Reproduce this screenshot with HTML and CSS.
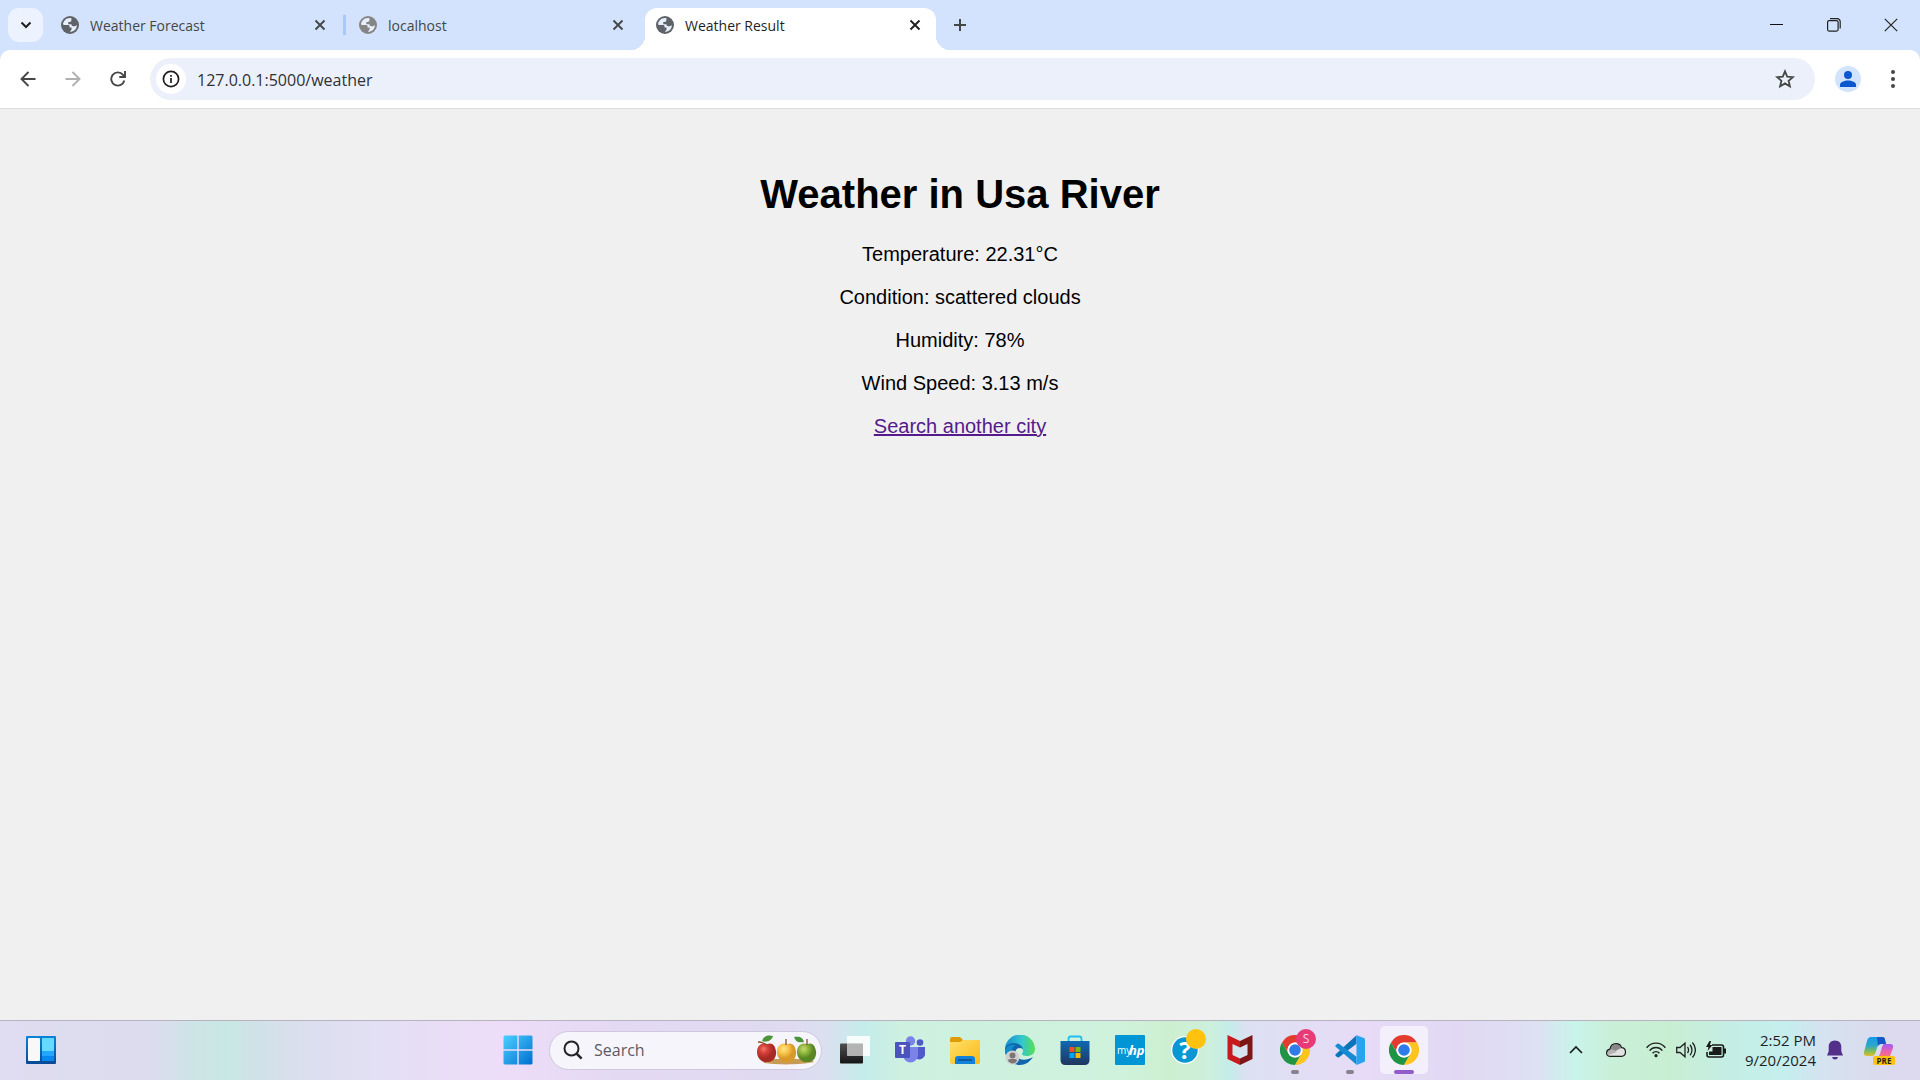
FILE: index.html
```html
<!DOCTYPE html>
<html lang="en">
<head>
<meta charset="utf-8">
<title>Weather Result</title>
<link rel="stylesheet" href="styles.css">
</head>
<body>
<svg class="defs" aria-hidden="true">
  <defs>
    <symbol id="globe" viewBox="0 0 18 18">
      <circle cx="9" cy="9" r="9" fill="currentColor"/>
      <path class="land" d="M10.400 2.200C5.800 1.400 2.200 4.600 2 8.600L3.400 9H7c1 0 1.600.6 1.600 1.500V11.600h2v1.700l-1.600 2.600c2.600.1 5.300-1.600 6.400-4.100.4-1 .4-1.800.4-2.700-.5.7-1.100 1.100-2 1.100h-1.700c-1 0-1.600-.6-1.600-1.600V8.200H7.300V5.900h1.300c1.100 0 1.800-.6 1.800-1.600z"/>
    </symbol>
    <symbol id="close" viewBox="0 0 12 12"><path d="M1.500 1.500l9 9m0-9l-9 9" fill="none" stroke="currentColor" stroke-width="1.900"/></symbol>
    <symbol id="chrome" viewBox="0 0 48 48">
      <path fill="#e33b2e" d="M24 12H44.800A24 24 0 0 0 3.200 12L13.600 30A12 12 0 0 1 24 12z"/>
      <path fill="#1f9444" d="M13.600 30L3.200 12A24 24 0 0 0 24 48L34.400 30A12 12 0 0 1 13.600 30z"/>
      <path fill="#fcc41c" d="M34.400 30L24 48A24 24 0 0 0 44.800 12H24A12 12 0 0 1 34.400 30z"/>
      <circle cx="24" cy="24" r="12" fill="#fff"/><circle cx="24" cy="24" r="9.300" fill="#2f7bea"/>
    </symbol>
  </defs>
</svg>

<header class="browser">
  <div class="tabstrip">
    <button class="tab-search" aria-label="Search tabs"><svg width="12" height="12" viewBox="0 0 12 12"><path d="M1.500 3.500L6 8l4.500-4.500" fill="none" stroke="#1f1f1f" stroke-width="2"/></svg></button>
    <div class="tab">
      <svg class="favicon"><use href="#globe"/></svg><span class="tab-title">Weather Forecast</span>
      <button class="tab-close" aria-label="Close Weather Forecast"><svg><use href="#close"/></svg></button>
    </div>
    <div class="tab divided">
      <svg class="favicon muted"><use href="#globe"/></svg><span class="tab-title">localhost</span>
      <button class="tab-close" aria-label="Close localhost"><svg><use href="#close"/></svg></button>
    </div>
    <div class="tab active">
      <svg class="favicon"><use href="#globe"/></svg><span class="tab-title">Weather Result</span>
      <button class="tab-close" aria-label="Close Weather Result"><svg><use href="#close"/></svg></button>
    </div>
    <button class="new-tab" aria-label="New tab"><svg width="14" height="14" viewBox="0 0 14 14"><path d="M7 1v12M1 7h12" stroke="#444746" stroke-width="2"/></svg></button>
    <div class="window-controls">
      <button aria-label="Minimize"><svg width="14" height="14" viewBox="0 0 14 14"><path d="M0 6.500h13" stroke="#111"/></svg></button>
      <button aria-label="Restore"><svg width="14" height="14" viewBox="0 0 14 14" fill="none" stroke="#222" stroke-width="1.200"><rect x=".6" y="2.600" width="10.500" height="10.500" rx="1.500"/><path d="M3 .6h7.200a3 3 0 0 1 3 3V10.500"/></svg></button>
      <button aria-label="Close window"><svg width="14" height="14" viewBox="0 0 14 14"><path d="M.8.8l12.400 12.400M13.200.8L.8 13.200" stroke="#222" stroke-width="1.200"/></svg></button>
    </div>
  </div>

  <div class="toolbar">
    <button class="tool" aria-label="Back"><svg width="16" height="16" viewBox="0 0 16 16"><path d="M15.500 8H2M8.500 1L1.500 8l7 7" fill="none" stroke="#444746" stroke-width="1.900"/></svg></button>
    <button class="tool" aria-label="Forward" disabled><svg width="16" height="16" viewBox="0 0 16 16"><path d="M.5 8H14M7.500 1l7 7-7 7" fill="none" stroke="#b0b0b0" stroke-width="1.900"/></svg></button>
    <button class="tool" aria-label="Reload"><svg width="16" height="16" viewBox="0 0 16 16"><path d="M14.300 9.500A6.600 6.600 0 1 1 13 3.800L14.800 6" fill="none" stroke="#444746" stroke-width="1.900"/><path d="M15 0v6H9.300" fill="none" stroke="#444746" stroke-width="1.900"/></svg></button>
    <div class="omnibox">
      <button class="site-info" aria-label="View site information"><svg width="18" height="18" viewBox="0 0 18 18"><circle cx="9" cy="9" r="7.600" fill="none" stroke="#1f1f1f" stroke-width="1.700"/><path d="M9 8v5M9 5v1.800" stroke="#1f1f1f" stroke-width="1.700"/></svg></button>
      <input class="address" type="text" aria-label="Address" value="127.0.0.1:5000/weather">
      <button class="bookmark" aria-label="Bookmark this page"><svg width="20" height="20" viewBox="0 0 20 20"><path d="M10 2.300l2.200 5.300 5.700.5-4.300 3.700 1.300 5.600L10 14.400l-4.900 3 1.300-5.600L2.100 8.100l5.700-.5z" fill="none" stroke="#444746" stroke-width="1.800"/></svg></button>
    </div>
    <button class="profile" aria-label="Profile"><svg width="16" height="16" viewBox="0 0 16 16"><circle cx="8" cy="4" r="4" fill="#0b57d0"/><path d="M0 16v-2.200C0 11.200 4.200 9.600 8 9.600s8 1.600 8 4.200V16z" fill="#0b57d0"/></svg></button>
    <button class="menu" aria-label="Menu"><svg width="4" height="18" viewBox="0 0 4 18" fill="#444746"><circle cx="2" cy="2" r="2"/><circle cx="2" cy="9" r="2"/><circle cx="2" cy="16" r="2"/></svg></button>
  </div>
</header>

<main class="page">
  <h1>Weather in Usa River</h1>
  <p>Temperature: 22.31°C</p>
  <p>Condition: scattered clouds</p>
  <p>Humidity: 78%</p>
  <p>Wind Speed: 3.13 m/s</p>
  <a href="#">Search another city</a>
</main>

<footer class="taskbar">
  <div class="task-left">
    <button class="widgets" aria-label="Widgets"><svg width="30" height="28" viewBox="0 0 30 28"><defs><linearGradient id="wg" x2="0" y2="1"><stop stop-color="#0a84d8"/><stop offset="1" stop-color="#0a4a94"/></linearGradient></defs><rect width="30" height="28" rx="1" fill="url(#wg)"/><rect x="2" y="2" width="12" height="23" rx="1" fill="#f8f8f8"/><path fill="#66d9ff" d="M16 2h12v13H16z"/><path fill="#22a6ff" d="M16 15h12v5H16z"/><path fill="#0b87f0" d="M16 20h12v5H16z"/></svg></button>
  </div>

  <div class="task-center">
    <button class="app" aria-label="Start"><svg width="30" height="30" viewBox="0 0 30 30"><defs><linearGradient id="win" x2="1" y2="1"><stop stop-color="#4bd0ff"/><stop offset="1" stop-color="#006fd0"/></linearGradient></defs><path fill="url(#win)" d="M1.500.5H14.300V14.300H.5V1.500zM15.700.5H28.500l1 1V14.300H15.700zM.5 15.700H14.300V29.500H1.500l-1-1zM15.700 15.700H29.500V28.500l-1 1H15.700z"/></svg></button>
    <label class="search">
      <svg width="20" height="20" viewBox="0 0 20 20" fill="none" stroke="#242424"><circle cx="8.500" cy="8.500" r="7" stroke-width="2"/><path d="M13.600 13.600l5 5" stroke-width="2.500"/></svg>
      <input type="search" placeholder="Search" aria-label="Search">
      <svg width="62" height="30" viewBox="0 0 62 30"><defs>
        <radialGradient id="ra" cx=".35" cy=".3"><stop stop-color="#ef7a68"/><stop offset=".45" stop-color="#d63e38"/><stop offset="1" stop-color="#a82a24"/></radialGradient>
        <radialGradient id="ya" cx=".35" cy=".3"><stop stop-color="#ffe58a"/><stop offset=".5" stop-color="#f9c54a"/><stop offset="1" stop-color="#d9992a"/></radialGradient>
        <radialGradient id="ga" cx=".35" cy=".3"><stop stop-color="#c6da70"/><stop offset=".5" stop-color="#8cb53c"/><stop offset="1" stop-color="#5a8524"/></radialGradient></defs>
        <path d="M6 24h48l4 3c-12 3-38 3-50 1z" fill="#c89b55"/>
        <path d="M11 9C5 7 1 11 1 17s5 11 10 10c6 1 10-5 9-11s-4-9-9-7z" fill="url(#ra)"/>
        <path d="M31 9c-6-2-10 2-10 8s5 11 10 10c6 1 10-5 9-11s-4-9-9-7z" fill="url(#ya)"/>
        <path d="M51 9c-6-2-10 2-10 8s5 11 10 10c6 1 10-5 9-11s-4-9-9-7z" fill="url(#ga)"/>
        <path d="M11 10C8 8 6 7 2 7M30 10V4M51 10V4" fill="none" stroke="#87512c" stroke-width="1.300"/>
        <path d="M6 6C8 0 13 0 17 1c-1 4-6 7-11 5zM38 2c5-1 9 0 10 5-5 1-8 0-10-5z" fill="#4b9439"/></svg>
    </label>
    <button class="app" aria-label="Task view"><svg width="30" height="30" viewBox="0 0 30 30"><defs><linearGradient id="tv" x2="0" y2="1"><stop stop-color="#505050"/><stop offset="1" stop-color="#151515"/></linearGradient></defs><rect y="8.500" width="23" height="20" rx="1" fill="url(#tv)"/><rect x="7" y="1" width="23" height="20" rx="1" fill="#fff" fill-opacity=".85"/><path d="M7 8.500h16V21H7z" fill="#999" fill-opacity=".65"/></svg></button>
    <button class="app" aria-label="Teams"><svg width="30" height="30" viewBox="0 0 30 30"><circle cx="15.500" cy="6" r="4.700" fill="#7b83eb"/><circle cx="25" cy="7.500" r="3.300" fill="#5059c9"/><path d="M22 12h8v8a6 6 0 0 1-8 4z" fill="#5059c9"/><path d="M8 12h15v8a7.500 7.500 0 0 1-15 0z" fill="#7b83eb"/><rect y="7" width="15" height="16" rx="1" fill="#4b53bc"/><text x="7.500" y="19" text-anchor="middle" class="teams-t">T</text></svg></button>
    <button class="app" aria-label="File Explorer"><svg width="30" height="30" viewBox="0 0 30 30"><defs><linearGradient id="fe" x2="1" y2="1"><stop stop-color="#ffe06a"/><stop offset="1" stop-color="#f9b916"/></linearGradient></defs><path d="M0 4q0-2 2-2h8l3 3h16q1 0 1 2v4H0z" fill="#dd9b05"/><path d="M0 7h10l3-2h17v22q0 2-2 2H2q-2 0-2-2z" fill="url(#fe)"/><path d="M5 29v-5q0-3 3-3h14q3 0 3 3v5z" fill="#1182d8"/><path d="M8 25h14" stroke="#0a4d91" stroke-width="1.500"/></svg></button>
    <button class="app" aria-label="Edge"><svg width="30" height="30" viewBox="0 0 30 30"><defs><linearGradient id="ed"><stop stop-color="#168ccc"/><stop offset=".55" stop-color="#33c5d2"/><stop offset="1" stop-color="#58e052"/></linearGradient></defs><path d="M0 15a15 15 0 0 1 30-1c0 5-4 7-8 7-3 0-5-1-5-2 0-1 1-1 1-3 0-3-3-5-7-5-6 0-10 3-11 6z" fill="url(#ed)"/><path d="M0 15c0-4 4-7 9-7 4 0 8 2 9 6-5-3-9 1-7 6 3 6 10 6 17 2-3 5-8 8-13 8C7 30 0 24 0 15z" fill="#1265ad"/><path d="M0 16c1-5 5-7 11-6-5 2-6 8-2 13C4 25 1 22 0 16z" fill="#138bcf"/><circle cx="7.500" cy="22.500" r="7" fill="#d2d0ce"/><circle cx="7.500" cy="20.500" r="3" fill="#7b7673"/><path d="M3 26q0-2 2-2h5q2 0 2 2-4 5-9 0z" fill="#7b7673"/></svg></button>
    <button class="app" aria-label="Microsoft Store"><svg width="30" height="30" viewBox="0 0 30 30"><defs><linearGradient id="st" x2="0" y2="1"><stop stop-color="#0f69b5"/><stop offset="1" stop-color="#20365e"/></linearGradient></defs><path d="M8.500 8V4q0-2.500 2-2.500h9q2 0 2 2.500v4" fill="none" stroke="#22bdf3" stroke-width="1.800"/><path d="M.5 6h29v19q0 5-5 5h-19q-5 0-5-5z" fill="url(#st)"/><path fill="#f25022" d="M9.500 12h5v5h-5z"/><path fill="#7fba00" d="M15.500 12h5v5h-5z"/><path fill="#00a4ef" d="M9.500 18h5v5h-5z"/><path fill="#ffb900" d="M15.500 18h5v5h-5z"/></svg></button>
    <button class="app" aria-label="myHP"><svg width="30" height="30" viewBox="0 0 30 30"><rect width="30" height="30" rx="1" fill="#0096d6"/><text x="2" y="19" class="hp-my">my</text><text x="14" y="20" class="hp-hp">hp</text></svg></button>
    <button class="app" aria-label="HP Support"><svg width="42" height="42" viewBox="0 0 42 42"><circle cx="21" cy="21" r="14" fill="#fff"/><circle cx="21" cy="21" r="12.700" fill="#0b97d3"/><text x="21" y="30" text-anchor="middle" class="help-q">?</text><circle cx="32" cy="10" r="10" fill="#ffc20e"/></svg></button>
    <button class="app" aria-label="McAfee"><svg width="26" height="30" viewBox="0 0 26 30"><path fill="#c8191e" d="M.5 0L13 6v6.500L5.500 9v11L13 23.500V30L.5 24z"/><path fill="#7d1717" d="M25.500 0L13 6v6.500L20.500 9v11L13 23.500V30l12.500-6z"/></svg></button>
    <button class="app running" aria-label="Chrome, profile S"><svg width="30" height="30"><use href="#chrome"/></svg><span class="badge">S</span></button>
    <button class="app running" aria-label="Visual Studio Code"><svg width="30" height="30" viewBox="0 0 30 30"><path fill="#0b75b9" d="M.4 19.500L21.500.3v8.500L4 22.300q-1 .5-2-.3l-1.600-1.400z"/><path fill="#168bd2" d="M.4 10.500L2 9q1-.8 2-.3l17.500 13v8L.4 11.500z"/><path fill="#25a4f0" d="M21.500.3L29 3q1 .5 1 1.500v21q0 1-1 1.500l-7.500 3z"/></svg></button>
    <button class="app running current" aria-label="Google Chrome"><svg width="30" height="30"><use href="#chrome"/></svg></button>
  </div>

  <div class="task-right">
    <button class="tray" aria-label="Show hidden icons"><svg width="14" height="14" viewBox="0 0 14 14"><path d="M1 10l6-6 6 6" fill="none" stroke="#1a1a1a" stroke-width="1.600"/></svg></button>
    <button class="tray" aria-label="OneDrive"><svg width="20" height="14" viewBox="0 0 20 14"><path d="M4 13.300C1 13.300.5 11 .6 9.500.8 7.500 2 6.500 4 6.200 4.500 2.500 7 .7 10 .7c2.700 0 4.800 1.400 5.600 4 2.600.2 3.900 2 3.900 4.300 0 2.600-1.500 4.300-4 4.300z" fill="#e2e2e2"/><path d="M4.400 6C5 3 7 1.200 10 1.200c2.500 0 4.300 1.300 5.100 3.700L9.500 8z" fill="#888"/><path d="M1 9c1-3 4-3 6-2l4 2-9 3z" fill="#b3b3b3"/><path d="M4 13.300C1 13.300.5 11 .6 9.500.8 7.500 2 6.500 4 6.200 4.500 2.500 7 .7 10 .7c2.700 0 4.800 1.400 5.600 4 2.600.2 3.900 2 3.900 4.300 0 2.600-1.500 4.300-4 4.300z" fill="none" stroke="#1c1c1c" stroke-width="1.200"/></svg></button>
    <div class="system">
      <svg width="20" height="16" viewBox="0 0 20 16" fill="none" stroke="#222" stroke-width="1.400"><path d="M.6 5.800C5.500-.4 14.500-.4 19.400 5.800M3.600 8.600c3.400-4.200 9.400-4.200 12.800 0M6.600 11.300c1.800-2.200 5-2.200 6.800 0"/><circle cx="10" cy="13.700" r="1.600" fill="#222" stroke="none"/></svg>
      <svg width="20" height="18" viewBox="0 0 20 18" fill="none" stroke="#222" stroke-width="1.300"><path d="M.7 6.500v5H4l5 4.300V2.200l-5 4.300zM11.500 6c1.300 1.800 1.300 4.200 0 6M14 3.800c2.600 3 2.600 7.400 0 10.400M16.400 1.500c4 4.300 4 10.700 0 15"/></svg>
      <svg width="20" height="18" viewBox="0 0 20 18"><path d="M6 4h9.500q2 0 2 2v8q0 2-2 2H3q-2 0-2-2v-3" fill="none" stroke="#1a1a1a" stroke-width="1.600"/><path d="M6.500 6h9v8H3v-3.500h3.500zM18 7.500h2v5h-2zM3.500 0L0 6h2.500L1.500 10 6.500 4H4L5 0z" fill="#1a1a1a"/></svg>
    </div>
    <time class="clock" datetime="2024-09-20T14:52">2:52 PM<br>9/20/2024</time>
    <button class="tray bell" aria-label="Notifications"><svg width="16" height="20" viewBox="0 0 16 20" fill="#55308a"><path d="M8 .5c4 0 6.300 2.800 6.300 6.300v4.500L16 15.500H0l1.700-4.200V6.800C1.700 3.300 4 .5 8 .5zM5 17h6q-.5 2.500-3 2.500T5 17z"/></svg></button>
    <button class="tray copilot" aria-label="Copilot preview"><svg width="30" height="28" viewBox="0 0 30 28"><defs>
      <linearGradient id="ca" x2="0" y2="1"><stop stop-color="#149bea"/><stop offset=".45" stop-color="#2ca7c9"/><stop offset=".75" stop-color="#7fbd58"/><stop offset="1" stop-color="#e7bd25"/></linearGradient>
      <linearGradient id="cb" x2="0" y2="1"><stop stop-color="#a25cf0"/><stop offset=".5" stop-color="#e660b4"/><stop offset="1" stop-color="#fa7c63"/></linearGradient></defs>
      <path d="M7 1h11q3 0 3 3l1 4h-5q-3 0-4 4l-2 6q-1 2-3 2H3q-4 0-3-4L3 5q1-4 4-4z" fill="url(#ca)"/><path d="M13 1h5q3 0 3 3l1 4h-5q-2 0-3 2z" fill="#1656c5"/><path d="M20 8h6q4 0 3 4l-3 8q-1 2-3 2H12q3-1 4-4l2-7q1-3 2-3z" fill="url(#cb)"/></svg><span class="pre">PRE</span></button>
  </div>
</footer>
</body>
</html>
```
FILE: styles.css
```css
* { box-sizing: border-box; }

body {
  margin: 0;
  min-height: 100vh;
  display: flex;
  flex-direction: column;
  background: #f0f0f0;
  font-family: "Open Sans", "Noto Sans", sans-serif;
  color: #1f1f1f;
}

.defs { position: absolute; width: 0; height: 0; }
svg { display: block; flex: none; }

button {
  display: flex;
  align-items: center;
  justify-content: center;
  flex: none;
  padding: 0;
  border: 0;
  background: none;
  font: inherit;
  color: inherit;
}

input {
  min-width: 0;
  padding: 0;
  border: 0;
  outline: 0;
  background: none;
  font: inherit;
  color: inherit;
}

/* Browser frame */
.browser { background: #d3e3fd; }

.tabstrip {
  display: flex;
  height: 50px;
  padding: 0 1px 0 8px;
}

.tab-search {
  width: 35px;
  height: 34px;
  margin: 8px 7px 0 0;
  border-radius: 11px;
  background: #ecf2fe;
}

.tab {
  position: relative;
  display: flex;
  align-items: center;
  gap: 11px;
  flex: 0 1 298px;
  height: 42px;
  margin-top: 8px;
  padding: 0 22px 8px 11px;
  color: #444746;
  font-size: 14px;
}

.tab.divided::before {
  content: "";
  position: absolute;
  left: -5px;
  top: 7px;
  width: 3px;
  height: 20px;
  background: #a8c7fa;
}

.tab.active {
  flex-basis: 291px;
  margin-left: -1px;
  padding-right: 15px;
  border-radius: 12px 12px 0 0;
  background: #fff;
  color: #1f1f1f;
}

.tab.active::before,
.tab.active::after {
  content: "";
  position: absolute;
  bottom: 0;
  width: 14px;
  height: 14px;
}
.tab.active::before { left: -14px; background: radial-gradient(circle at 0 0, transparent 14px, #fff 14px); }
.tab.active::after { right: -14px; background: radial-gradient(circle at 100% 0, transparent 14px, #fff 14px); }

.favicon { width: 18px; height: 18px; color: #5f6368; }
.favicon.muted { color: #858585; }
.land { fill: #e8effc; }
.tab-title { flex: 1; white-space: nowrap; }
.tab-close { width: 12px; height: 12px; }
.tab-close svg { width: 12px; height: 12px; }
.new-tab { width: 32px; margin-left: 8px; }

.window-controls { display: flex; margin-left: auto; }
.window-controls button { width: 57px; }

.toolbar {
  display: flex;
  align-items: center;
  height: 59px;
  padding: 8px 9px 8px 5px;
  border-bottom: 1px solid #dcdcdc;
  border-radius: 10px 10px 0 0;
  background: #fff;
}

.tool { width: 45px; height: 42px; }

.omnibox {
  display: flex;
  align-items: center;
  flex: 1;
  height: 42px;
  margin-left: 10px;
  padding: 0 20px 0 6px;
  border-radius: 21px;
  background: #ecf0fa;
  font-size: 16px;
}

.site-info {
  width: 30px;
  height: 30px;
  margin-right: 11px;
  border-radius: 50%;
  background: #fff;
}

.address { flex: 1; padding-top: 2px; color: #303234; }

.profile {
  width: 26px;
  height: 26px;
  margin-left: 20px;
  border-radius: 50%;
  background: #d3e3fd;
}

.menu { width: 36px; height: 42px; margin-left: 14px; }

/* Weather page */
.page {
  flex: 1;
  padding: 62px 20px;
  font: 20px/23px "Liberation Sans", Arial, sans-serif;
  text-align: center;
  color: #000;
}
.page h1 { margin: 0 0 26px; font-size: 40px; line-height: 46px; }
.page p { margin: 0 0 20px; }
.page a { color: #551a8b; }

/* Taskbar */
.taskbar {
  display: grid;
  grid-template-columns: 1fr auto 1fr;
  align-items: center;
  height: 60px;
  padding: 0 0 1px 2px;
  border-top: 1px solid #b6b2c0;
  background: linear-gradient(90deg,
    #e0dcf1 0%, #dcdcee 8%, #cde4e7 10%, #c8e8e3 12%, #cfe2e8 13%, #dbdfee 16%,
    #e4dff5 20%, #eeddf8 26%, #e4d9f3 32%, #dfdaf0 41%, #dbe0f0 43%, #c4ecea 45%,
    #cdf0e0 47%, #cff2dd 58%, #cdefd0 61%, #cdefdc 63%, #c4ece8 64%, #dde0f2 65%,
    #e7dbf7 71%, #e1d9f3 76%, #dee0f3 80%, #c8f4ea 82%, #c9efd8 84%, #c8eed2 87%,
    #c4eee4 90%, #c5eeee 93%, #d5e2ef 95%, #ddd9ee 99%);
}

.task-left { padding-left: 24px; }

.task-center { display: flex; align-items: center; }

.app { position: relative; width: 55px; height: 48px; }

.search {
  display: flex;
  align-items: center;
  width: 273px;
  height: 39px;
  margin: 0 5px 0 4px;
  padding: 0 3px 0 13px;
  border: 1px solid #cfc8dd;
  border-radius: 20px;
  background: #f7f5fc;
}
.search input { flex: 1; padding-left: 11px; font-size: 16px; }
.search input::placeholder { color: #5d5b62; opacity: 1; }

.running::after {
  content: "";
  position: absolute;
  left: 50%;
  bottom: 0;
  width: 8px;
  height: 4px;
  margin-left: -4px;
  border-radius: 2px;
  background: #86808f;
}
.current { width: 48px; margin: 0 4px 0 3px; border-radius: 5px; background: #f4f0fb; }
.current::after { width: 20px; margin-left: -10px; background: #915bc9; }

.badge {
  position: absolute;
  top: 3px;
  right: 6px;
  width: 20px;
  height: 20px;
  border-radius: 50%;
  background: #e93a78;
  font-size: 12px;
  line-height: 20px;
  color: #ffd3e4;
}

.teams-t { font: bold 12px "Open Sans", sans-serif; fill: #fff; }
.hp-my { font: 10px "Open Sans", sans-serif; fill: #fff; }
.hp-hp { font: italic bold 13px "Open Sans", sans-serif; fill: #fff; }
.help-q { font: bold 24px "Open Sans", sans-serif; fill: #fff; }

.task-right {
  display: flex;
  align-items: center;
  justify-content: flex-end;
  padding-right: 16px;
}
.tray { position: relative; width: 40px; height: 48px; }
.system { display: flex; align-items: center; gap: 10px; margin-left: 10px; }
.clock {
  width: 80px;
  margin-left: 10px;
  font-size: 15px;
  line-height: 20px;
  text-align: right;
  white-space: nowrap;
}
.bell { width: 38px; }
.copilot { width: 50px; }
.pre {
  position: absolute;
  right: 9px;
  bottom: 9px;
  width: 22px;
  height: 9px;
  border-radius: 2px;
  background: #ffc20e;
  font-size: 8px;
  font-weight: 700;
  line-height: 9px;
}
```
